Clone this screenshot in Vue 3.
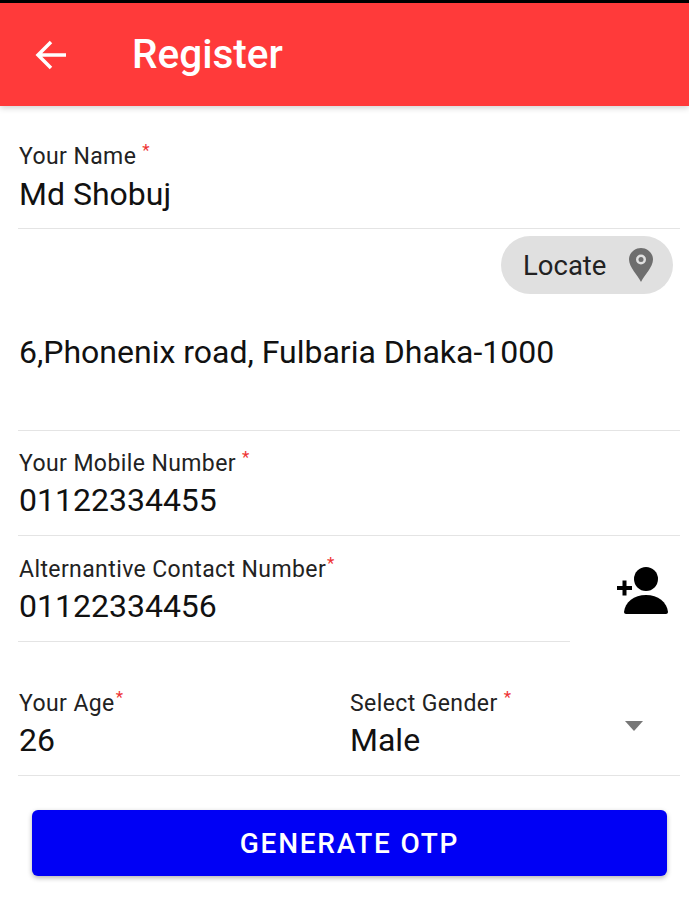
<template>
  <div class="screen">
    <div class="status-line"></div>
    <header class="app-bar">
      <svg class="back" viewBox="0 0 32 32" width="32" height="32" fill="none" stroke="#fff" stroke-width="3.500">
        <path d="M31 16H3M16 3 3 16l13 13" />
      </svg>
      <h1 class="title">Register</h1>
    </header>

    <main class="form">
      <div class="field name-field">
        <label class="label">Your Name<sup class="req">*</sup></label>
        <div class="value">Md Shobuj</div>
      </div>

      <div class="address">
        <div class="locate-row">
          <button class="locate">
            <span>Locate</span>
            <svg viewBox="0 0 24 36" width="24" height="36">
              <path fill="#6e6e6e" fill-rule="evenodd" d="M12 1C5.600 1 0 6 0 12.500 0 20 8.500 28 12 35c3.500-7 12-15 12-22.500C24 6 18.400 1 12 1Zm0 6.500a5 5 0 1 1 0 10 5 5 0 0 1 0-10Z" />
              <circle cx="12" cy="12.500" r="2.500" fill="#6e6e6e" />
            </svg>
          </button>
        </div>
        <div class="value address-text">6,Phonenix road, Fulbaria Dhaka-1000</div>
      </div>

      <div class="field mobile-field">
        <label class="label">Your Mobile Number<sup class="req">*</sup></label>
        <div class="value">01122334455</div>
      </div>

      <div class="alt-row">
        <div class="field alt-field">
          <label class="label">Alternantive Contact Number<sup class="req tight">*</sup></label>
          <div class="value">01122334456</div>
        </div>
        <svg class="add-contact" viewBox="0 0 54 50" width="54" height="50">
          <circle cx="30" cy="14" r="12" fill="#000" />
          <path fill="#000" d="M10 49c-1 0-2-1-2-2 1-10 10-17 22-17s21 7 22 17c0 1-1 2-2 2Z" />
          <path fill="none" stroke="#000" stroke-width="4" d="M1 23h15M8.500 15.500v15" />
        </svg>
      </div>

      <div class="age-row">
        <div class="age">
          <label class="label">Your Age<sup class="req tight">*</sup></label>
          <div class="value">26</div>
        </div>
        <div class="gender">
          <label class="label">Select Gender<sup class="req">*</sup></label>
          <div class="value">Male</div>
          <span class="caret"></span>
        </div>
      </div>

      <button class="otp">GENERATE OTP</button>
    </main>
  </div>
</template>

<script setup>
</script>

<style scoped>
.screen {
  width: 689px; height: 900px; overflow: hidden; background: #fff;
  font-family: Roboto, "Liberation Sans", sans-serif; color: #111;
  display: flex; flex-direction: column;
}
.status-line { height: 3px; background: #000; flex-shrink: 0; }

.app-bar {
  height: 103px; flex-shrink: 0; background: #ff3a3a;
  display: flex; align-items: center; padding-left: 35px;
  box-shadow: 0 2px 6px rgba(0,0,0,.18);
}
.back { flex-shrink: 0; }
.title {
  margin: 0 0 2px 65px; font-size: 40.5px; font-weight: 500; color: #fff;
}

.form { padding: 0 9px 0 18px; display: flex; flex-direction: column; }

.field { border-bottom: 1px solid #e4e4e4; }
.label {
  display: block; font-size: 23px; line-height: 26px; letter-spacing: .4px;
  color: #222; padding-left: 1px;
}
.value { font-size: 32px; line-height: 40px; color: #111; padding-left: 1px; margin-top: 3px; }
.req { color: #e33; font-size: 17px; line-height: 0; margin-left: 6px; vertical-align: 8px; letter-spacing: 0; }
.req.tight { margin-left: 1px; }

.name-field { margin-top: 38px; height: 84px; }
.name-field .value { margin-top: 4px; }

.address { border-bottom: 1px solid #e4e4e4; height: 201px; }
.locate-row { display: flex; justify-content: flex-end; padding: 7px 7px 0 0; }
.locate {
  width: 172px; height: 58px; border: 0; border-radius: 29px; background: #e0e0e0;
  display: flex; align-items: center; gap: 23px; padding: 0 0 0 22px;
  font: 400 27.5px Roboto, "Liberation Sans", sans-serif; color: #222;
}
.address-text { margin-top: 38px; }

.mobile-field { margin-top: 20px; height: 84px; }

.alt-row { display: flex; align-items: flex-start; }
.alt-field { width: 552px; margin-top: 21px; height: 84px; flex-shrink: 0; }
.alt-field .value { margin-top: 3px; }
.add-contact { margin: 29px 0 0 46px; flex-shrink: 0; }

.age-row {
  display: flex; margin-top: 49px; height: 84px; border-bottom: 1px solid #e4e4e4;
}
.age { width: 331px; flex-shrink: 0; }
.gender { position: relative; flex: 1; }
.caret {
  position: absolute; top: 30px; right: 37px;
  border-left: 9px solid transparent; border-right: 9px solid transparent;
  border-top: 10px solid #777;
}

.otp {
  margin: 34px 13px 0 14px; height: 66px; border: 0; border-radius: 6px;
  background: #0000f5; color: #fff;
  font: 500 28px Roboto, "Liberation Sans", sans-serif; letter-spacing: 1.75px;
  box-shadow: 0 2px 5px rgba(0,0,0,.3);
}
</style>
